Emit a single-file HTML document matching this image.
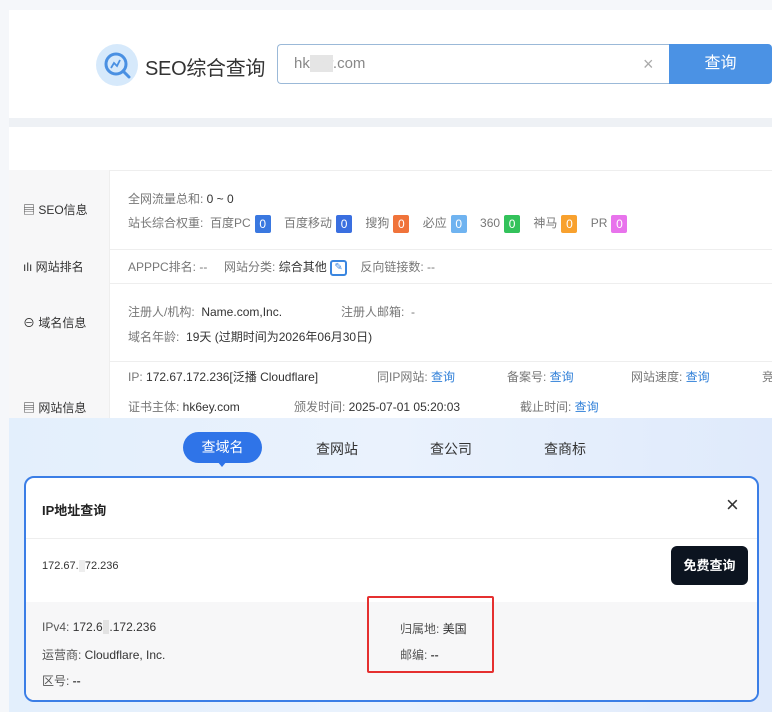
<!DOCTYPE html>
<html><head><meta charset="utf-8"><style>
*{margin:0;padding:0;box-sizing:border-box}
body{width:772px;height:712px;overflow:hidden;background:#f5f7fa;font-family:"Liberation Sans","Noto Sans CJK SC",sans-serif;color:#333;position:relative}
.a{position:absolute;white-space:nowrap}
.g{color:#777}
.b{color:#2f7fd8}
.badge{display:inline-block;width:16px;height:18px;line-height:18px;text-align:center;color:#fff;font-size:12px;border-radius:2px;margin-left:4px;vertical-align:middle}
.lab{position:absolute;left:9px;width:101px;background:#f7f7f8;border-right:1px solid #eee;font-size:12px;color:#333;display:flex;align-items:center;padding-left:14px}
.row{position:absolute;left:9px;right:0;border-top:1px solid #eee;background:#fff}
.f12{font-size:12px}
</style></head><body>
<div class="a" style="left:9px;top:10px;width:763px;height:108px;background:#fff"></div>
<div class="a" style="left:9px;top:118px;width:763px;height:9px;background:#eef1f5"></div>
<div class="a" style="left:9px;top:127px;width:763px;height:43px;background:#fff"></div>
<!-- logo -->
<div class="a" style="left:96px;top:44px;width:42px;height:42px;border-radius:50%;background:#d6e9fb"></div>
<svg class="a" style="left:96px;top:44px" width="42" height="42" viewBox="0 0 42 42"><circle cx="20" cy="20" r="10" fill="none" stroke="#4a90e2" stroke-width="3"/><path d="M27 27l6 6" stroke="#4a90e2" stroke-width="3" stroke-linecap="round"/><path d="M15 24l3-5 3 3 3-6" fill="none" stroke="#4a90e2" stroke-width="1.8"/></svg>
<div class="a" style="left:145px;top:52px;font-size:20px;color:#333;letter-spacing:-0.3px">SEO综合查询</div>
<div class="a" style="left:277px;top:44px;width:393px;height:40px;border:1px solid #9bb9d8;border-right:none;border-radius:4px 0 0 4px;background:#fff"></div>
<div class="a" style="left:294px;top:55px;font-size:15px;color:#888">hk<span style="background:#e5e5e5;color:#e5e5e5">6ey</span>.com</div>
<div class="a" style="left:643px;top:54px;font-size:18px;color:#aaa">×</div>
<div class="a" style="left:669px;top:44px;width:103px;height:40px;background:#4b92e4;border-radius:0 4px 4px 0;color:#fff;font-size:16px;text-align:center;line-height:40px">查询</div>

<!-- rows -->
<div class="row" style="top:170px;height:79px"></div>
<div class="lab" style="top:170px;height:79px">▤ SEO信息</div>
<div class="a f12 g" style="left:128px;top:190px">全网流量总和: <span style="color:#333">0 ~ 0</span></div>
<div class="a f12 g" style="left:128px;top:214px">站长综合权重: &nbsp;百度PC<span class="badge" style="background:#3a78e0">0</span> &nbsp; &nbsp;百度移动<span class="badge" style="background:#3a6fe0">0</span> &nbsp; &nbsp;搜狗<span class="badge" style="background:#f0733a">0</span> &nbsp; &nbsp;必应<span class="badge" style="background:#6fb3f0">0</span> &nbsp; &nbsp;360<span class="badge" style="background:#33c25b">0</span> &nbsp; &nbsp;神马<span class="badge" style="background:#f8a12e">0</span> &nbsp; &nbsp;PR<span class="badge" style="background:#e873ec">0</span></div>

<div class="row" style="top:249px;height:34px"></div>
<div class="lab" style="top:249px;height:34px">ılı 网站排名</div>
<div class="a f12 g" style="left:128px;top:258px">APPPC排名: -- &nbsp; &nbsp; 网站分类: <span style="color:#333">综合其他</span> <span style="display:inline-block;width:17px;height:16px;border:2px solid #3a86e0;border-radius:3px;vertical-align:middle;color:#3a86e0;font-size:10px;line-height:12px;text-align:center">✎</span> &nbsp; &nbsp;反向链接数: --</div>

<div class="row" style="top:283px;height:78px"></div>
<div class="lab" style="top:283px;height:78px">⊖ 域名信息</div>
<div class="a f12 g" style="left:128px;top:303px">注册人/机构: &nbsp;<span style="color:#333">Name.com,Inc.</span></div>
<div class="a f12 g" style="left:341px;top:303px">注册人邮箱: &nbsp;-</div>
<div class="a f12 g" style="left:128px;top:328px">域名年龄: &nbsp;<span style="color:#333">19天 (过期时间为2026年06月30日)</span></div>

<div class="row" style="top:361px;height:57px"></div>
<div class="lab" style="top:361px;height:57px;align-items:flex-end;padding-bottom:2px">▤ 网站信息</div>
<div class="a f12 g" style="left:128px;top:368px">IP: <span style="color:#333">172.67.172.236[泛播 Cloudflare]</span></div>
<div class="a f12 g" style="left:377px;top:368px">同IP网站: <span class="b">查询</span></div>
<div class="a f12 g" style="left:507px;top:368px">备案号: <span class="b">查询</span></div>
<div class="a f12 g" style="left:631px;top:368px">网站速度: <span class="b">查询</span></div>
<div class="a f12 g" style="left:762px;top:368px">竞</div>
<div class="a f12 g" style="left:128px;top:398px">证书主体: <span style="color:#333">hk6ey.com</span></div>
<div class="a f12 g" style="left:294px;top:398px">颁发时间: <span style="color:#333">2025-07-01 05:20:03</span></div>
<div class="a f12 g" style="left:520px;top:398px">截止时间: <span class="b">查询</span></div>

<!-- bottom panel -->
<div class="a" style="left:9px;top:418px;width:763px;height:294px;background:linear-gradient(90deg,#e3effc,#eaf2fd 50%,#dfeafb)"></div>
<div class="a" style="left:183px;top:432px;width:79px;height:31px;background:#2f74e8;border-radius:16px;color:#fff;font-size:14px;text-align:center;line-height:31px">查域名</div>
<div class="a" style="left:217px;top:461px;width:0;height:0;border-left:5px solid transparent;border-right:5px solid transparent;border-top:6px solid #2f74e8"></div>
<div class="a" style="left:316px;top:439px;font-size:14px">查网站</div>
<div class="a" style="left:430px;top:439px;font-size:14px">查公司</div>
<div class="a" style="left:544px;top:439px;font-size:14px">查商标</div>

<div class="a" style="left:24px;top:476px;width:735px;height:226px;border:2px solid #3b7ee6;border-radius:10px;background:#fff;overflow:hidden">
  <div class="a" style="left:16px;top:22px;font-size:13px;font-weight:bold;color:#222">IP地址查询</div>
  <div class="a" style="left:700px;top:16px;font-size:22px;color:#333;line-height:22px">×</div>
  <div class="a" style="left:0;top:60px;width:100%;height:1px;background:#eee"></div>
  <div class="a" style="left:16px;top:82px;font-size:11px;color:#333">172.67.<span style="background:#eee;color:#eee">1</span>72.236</div>
  <div class="a" style="left:645px;top:68px;width:77px;height:39px;background:#0c1420;border-radius:6px;color:#fff;font-size:13px;font-weight:bold;text-align:center;line-height:39px">免费查询</div>
  <div class="a" style="left:0;top:124px;width:100%;height:102px;background:#f7f7f8"></div>
  <div class="a f12" style="left:16px;top:142px;color:#555">IPv4: <span style="color:#333">172.6<span style="background:#e2e2e2;color:#e2e2e2">7</span>.172.236</span></div>
  <div class="a f12" style="left:16px;top:168px;color:#555">运营商: <span style="color:#333">Cloudflare, Inc.</span></div>
  <div class="a f12" style="left:16px;top:194px;color:#555">区号: <b>--</b></div>
  <div class="a f12" style="left:374px;top:142px;color:#555">归属地: <span style="color:#333">美国</span></div>
  <div class="a f12" style="left:374px;top:168px;color:#555">邮编: <b>--</b></div>
</div>
<div class="a" style="left:367px;top:596px;width:127px;height:77px;border:2px solid #e53030;border-radius:2px"></div>
</body></html>
